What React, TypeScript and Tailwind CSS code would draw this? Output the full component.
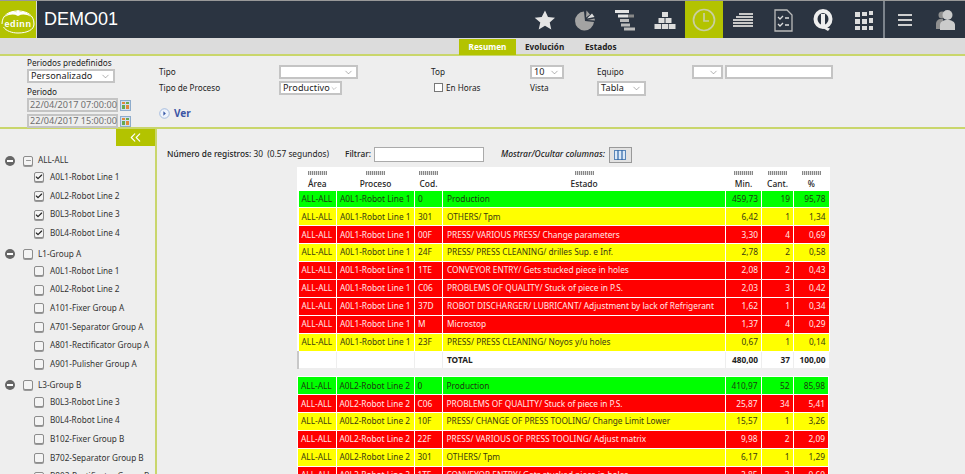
import { ChevronDown, ChevronsLeft, Check, Minus } from "lucide-react";

const FONT = "[font-family:'Noto_Sans','DejaVu_Sans',sans-serif]";

type Row = { code: string; state: string; min: string; cant: string; pct: string; color: "g" | "y" | "r" };

const line1: Row[] = [
  { code: "0", state: "Production", min: "459,73", cant: "19", pct: "95,78", color: "g" },
  { code: "301", state: "OTHERS/ Tpm", min: "6,42", cant: "1", pct: "1,34", color: "y" },
  { code: "00F", state: "PRESS/ VARIOUS PRESS/ Change parameters", min: "3,30", cant: "4", pct: "0,69", color: "r" },
  { code: "24F", state: "PRESS/ PRESS CLEANING/ drilles Sup. e Inf.", min: "2,78", cant: "2", pct: "0,58", color: "y" },
  { code: "1TE", state: "CONVEYOR ENTRY/ Gets stucked piece in holes", min: "2,08", cant: "2", pct: "0,43", color: "r" },
  { code: "C06", state: "PROBLEMS OF QUALITY/ Stuck of piece in P.S.", min: "2,03", cant: "3", pct: "0,42", color: "r" },
  { code: "37D", state: "ROBOT DISCHARGER/ LUBRICANT/ Adjustment by lack of Refrigerant", min: "1,62", cant: "1", pct: "0,34", color: "r" },
  { code: "M", state: "Microstop", min: "1,37", cant: "4", pct: "0,29", color: "r" },
  { code: "23F", state: "PRESS/ PRESS CLEANING/ Noyos y/u holes", min: "0,67", cant: "1", pct: "0,14", color: "y" },
];

const line2: Row[] = [
  { code: "0", state: "Production", min: "410,97", cant: "52", pct: "85,98", color: "g" },
  { code: "C06", state: "PROBLEMS OF QUALITY/ Stuck of piece in P.S.", min: "25,87", cant: "34", pct: "5,41", color: "r" },
  { code: "10F", state: "PRESS/ CHANGE OF PRESS TOOLING/ Change Limit Lower", min: "15,57", cant: "1", pct: "3,26", color: "y" },
  { code: "22F", state: "PRESS/ VARIOUS OF PRESS TOOLING/ Adjust matrix", min: "9,98", cant: "2", pct: "2,09", color: "r" },
  { code: "301", state: "OTHERS/ Tpm", min: "6,17", cant: "1", pct: "1,29", color: "y" },
  { code: "1TE", state: "CONVEYOR ENTRY/ Gets stucked piece in holes", min: "2,85", cant: "3", pct: "0,60", color: "r" },
];

const tree = [
  {
    name: "ALL-ALL",
    state: "some",
    items: ["A0L1-Robot Line 1", "A0L2-Robot Line 2", "B0L3-Robot Line 3", "B0L4-Robot Line 4"],
  },
  {
    name: "L1-Group A",
    state: "none",
    items: [
      "A0L1-Robot Line 1",
      "A0L2-Robot Line 2",
      "A101-Fixer Group A",
      "A701-Separator Group A",
      "A801-Rectificator Group A",
      "A901-Pulisher Group A",
    ],
  },
  {
    name: "L3-Group B",
    state: "none",
    items: [
      "B0L3-Robot Line 3",
      "B0L4-Robot Line 4",
      "B102-Fixer Group B",
      "B702-Separator Group B",
      "B802-Rectificator Group B",
    ],
  },
];

function Logo() {
  return (
    <div className="flex h-full w-[36px] shrink-0 items-center justify-center bg-[#b3c300]">
      <svg viewBox="0 0 36 36" className="h-[36px] w-[36px]">
        <path d="M2 22 C2 13 9 9 18 9 C27 9 34 13 34 22 C34 28 27 31 18 31 C12 31 6 29 3.5 25" fill="none" stroke="#fff" strokeWidth="1" />
        <path d="M5 15 C10 8 15 9 18 11 C21 9 27 9 31 15 C26 12 22 12 18 14 C14 12 10 12 5 15Z" fill="#fff" />
        <circle cx="18" cy="10" r="1.800" fill="#fff" />
        <text x="18" y="25" textAnchor="middle" fontSize="9" fontWeight="700" fill="#fff" fontFamily="'Liberation Sans', sans-serif" letterSpacing="0.6">
          edinn
        </text>
      </svg>
    </div>
  );
}

function NavIcon({ children, active }: { children: React.ReactNode; active?: boolean }) {
  return (
    <div className={`flex h-full w-[40px] items-center justify-center ${active ? "bg-[#b3c300]" : ""}`}>
      <svg viewBox="0 0 24 24" className="h-[24px] w-[24px]">
        {children}
      </svg>
    </div>
  );
}

function Header() {
  return (
    <div className="flex h-[38px] border-t border-[#999] bg-[#2b3441]">
      <Logo />
      <div className="flex w-[8px] border-l border-[#d8d8d8]" />
      <div className="flex-1 text-[18px] leading-[36px] text-white [font-family:'Liberation_Sans',sans-serif]">DEMO01</div>
      <div className="flex h-full">
        <NavIcon>
          <path d="M12 2.500l3 6.600 7 .7-5.300 4.700 1.600 7.100-6.300-3.800-6.300 3.800 1.600-7.100L1.700 9.800l7-.7z" fill="#e4e4e4" />
        </NavIcon>
        <NavIcon>
          <path d="M11 3.500A9.500 9.500 0 1 0 21 14L12 13z" fill="#a3a3a3" />
          <path d="M13.500 2.500l3.500 4-4 3z" fill="#a3a3a3" />
          <path d="M14 10.500l5-5 2.500 3.500z" fill="#ddd" />
          <path d="M14.500 12l7-1.500.5 2z" fill="#a3a3a3" />
        </NavIcon>
        <NavIcon>
          <rect x="2" y="2" width="14" height="3" fill="#e4e4e4" />
          <rect x="5" y="6.500" width="10" height="3" fill="#e4e4e4" />
          <rect x="15" y="6.500" width="6" height="3" fill="#888" />
          <rect x="7" y="11" width="9" height="3" fill="#bbb" />
          <rect x="8" y="15.500" width="9" height="3" fill="#bbb" />
          <rect x="11" y="19.500" width="11" height="3" fill="#bbb" />
        </NavIcon>
        <NavIcon>
          <rect x="9" y="4" width="6" height="5" fill="#ddd" />
          <rect x="5.500" y="10" width="6" height="5" fill="#ddd" />
          <rect x="12.500" y="10" width="6" height="5" fill="#ddd" />
          <rect x="1.500" y="16" width="6.500" height="5" fill="#ddd" />
          <rect x="8.800" y="16" width="6.500" height="5" fill="#ddd" />
          <rect x="16" y="16" width="6.500" height="5" fill="#ddd" />
        </NavIcon>
        <div className="flex h-full w-[38px] items-center justify-center bg-[#b3c300]">
          <svg viewBox="0 0 24 24" className="h-[24px] w-[24px]" fill="none" stroke="#c9cfa0" strokeWidth="1.700">
            <circle cx="12" cy="12" r="10.500" />
            <path d="M12 5v8h5" />
          </svg>
        </div>
        <NavIcon>
          <path d="M8 5h14v2H8zM5 8h17v2H5zM2 11h20v2H2zM2 14h20v2H2zM2 17h20v2H2z" fill="#c8c8c8" />
        </NavIcon>
        <NavIcon>
          <path d="M4 2h12l5 5v16H4z" fill="none" stroke="#bbb" strokeWidth="1.300" />
          <path d="M7 9l2 2 3-3M7 16l2 2 3-3" fill="none" stroke="#ddd" strokeWidth="1.300" />
          <path d="M14 10h4M14 17h4" stroke="#ddd" strokeWidth="1.300" />
        </NavIcon>
        <NavIcon>
          <ellipse cx="12" cy="11" rx="7.500" ry="8" fill="none" stroke="#eee" strokeWidth="4" />
          <path d="M10 6h4v13l5 1.500-2 2.500-7-4z" fill="#eee" />
        </NavIcon>
        <NavIcon>
          <path d="M4 4h5v5H4zM11 4h5v4h-5zM18 3h4v4h-4zM4 11h5v5H4zM11 11h5v5h-5zM18 10h4v5h-4zM4 18h5v4H4zM11 18h5v4h-5zM18 18h4v4h-4z" fill="#ddd" />
        </NavIcon>
        <div className="w-[2px] bg-[#7c838c]" />
        <NavIcon>
          <path d="M5 6h14v2H5zM5 11h14v2H5zM5 16h14v2H5z" fill="#cfcfcf" />
        </NavIcon>
        <NavIcon>
          <circle cx="9" cy="7" r="3.500" fill="#8f8f8f" />
          <path d="M3 21v-5c0-3 2-5 5-5h2v10z" fill="#8f8f8f" />
          <circle cx="14.500" cy="7" r="5" fill="#cbcbcb" />
          <path d="M7 22v-5c0-3 3-5 7.500-5s7.500 2 7.500 5v5z" fill="#cbcbcb" />
        </NavIcon>
      </div>
    </div>
  );
}

function Tabs() {
  return (
    <div className="flex h-[18px] border-b-2 border-[#c9d66b] bg-[#dcdcdc] pl-[459px] pt-[1px] text-[8.200px] font-bold text-[#222]">
      <div className="flex h-[16px] w-[57px] items-center justify-center bg-[#b3c300] text-white">Resumen</div>
      <div className="flex h-[16px] w-[69px] items-center pl-[9px]">Evolución</div>
      <div className="flex h-[16px] items-center">Estados</div>
    </div>
  );
}

function Select({ value, className }: { value?: string; className: string }) {
  return (
    <div className={`flex items-center justify-between border-2 border-[#c4c4c4] bg-white pl-[2px] pr-[2px] text-[9.100px] leading-none tracking-[0.1px] text-[#222] ${className}`}>
      <span>{value}</span>
      <ChevronDown size={11} strokeWidth={1} className="text-[#555]" />
    </div>
  );
}

function DateField({ value }: { value: string }) {
  return (
    <div className="flex items-center gap-[2px]">
      <div className="flex h-[14px] w-[91px] items-center whitespace-nowrap border-2 border-[#c4c4c4] bg-[#eee] pl-[1px] text-[9.100px] leading-none text-[#6e6e6e]">
        {value}
      </div>
      <svg viewBox="0 0 11 11" className="h-[11px] w-[11px]">
        <rect x="0.500" y="0.500" width="10" height="10" fill="#cfe0f2" stroke="#8eaccc" />
        <rect x="2" y="2" width="3" height="2" fill="#e08a3c" />
        <rect x="6" y="2" width="3" height="2" fill="#6aa84f" />
        <rect x="2" y="5" width="3" height="4" fill="#6aa84f" />
        <rect x="6" y="5" width="3" height="4" fill="#e08a3c" />
      </svg>
    </div>
  );
}

function Filters() {
  return (
    <div className="flex h-[73px] border-b-2 border-[#c9d66b] pl-[27px] text-[8.200px] text-[#222]">
      <div className="w-[132px] pt-[1px]">
        <div className="h-[12px] leading-[12px]">Periodos predefinidos</div>
        <Select value="Personalizado" className="h-[14px] w-[88px]" />
        <div className="mt-[2px] h-[13px] leading-[13px]">Periodo</div>
        <div className="flex flex-col gap-[2px]">
          <DateField value="22/04/2017 07:00:00" />
          <DateField value="22/04/2017 15:00:00" />
        </div>
      </div>
      <div className="w-[272px] pt-[8px]">
        <div className="flex h-[16px] items-center">
          <span className="w-[120px]">Tipo</span>
          <Select className="h-[14px] w-[79px]" />
        </div>
        <div className="flex h-[16px] items-center">
          <span className="w-[120px]">Tipo de Proceso</span>
          <Select value="Productivo" className="h-[14px] w-[63px]" />
        </div>
        <div className="mt-[10px] flex items-center gap-[4px] text-[10px] font-bold text-[#3b55a5]">
          <svg viewBox="0 0 12 12" className="h-[11px] w-[11px]">
            <circle cx="6" cy="6" r="5.200" fill="#eef3fb" stroke="#9db6dd" />
            <path d="M4.800 3.500L7.500 6 4.800 8.500z" fill="#3a5aa8" />
          </svg>
          Ver
        </div>
      </div>
      <div className="w-[166px] pt-[8px]">
        <div className="flex h-[16px] items-center">
          <span className="w-[99px]">Top</span>
          <Select value="10" className="h-[14px] w-[34px]" />
        </div>
        <div className="flex h-[16px] items-center">
          <span className="flex w-[99px] items-center gap-[3px] pl-[3px]">
            <span className="h-[9px] w-[9px] border border-[#777] bg-white" />
            En Horas
          </span>
          <span>Vista</span>
        </div>
      </div>
      <div className="w-[240px] pt-[8px]">
        <div className="flex h-[16px] items-center">
          <span className="w-[95px]">Equipo</span>
          <Select className="h-[14px] w-[31px]" />
          <div className="ml-[2px] h-[14px] w-[108px] border-2 border-[#c4c4c4] bg-white" />
        </div>
        <div className="flex h-[16px] items-center">
          <Select value="Tabla" className="h-[15px] w-[49px]" />
        </div>
      </div>
    </div>
  );
}

function TreeBox({ state }: { state: string }) {
  return (
    <span className="flex h-[10px] w-[10px] shrink-0 items-center justify-center rounded-[2px] border border-[#8c8c8c] bg-[#f4f4f4] shadow-[0_1px_0_#999]">
      {state === "all" && <Check size={8} strokeWidth={3.500} className="text-[#222]" />}
      {state === "some" && <Minus size={7} strokeWidth={2} className="text-[#555]" />}
    </span>
  );
}

function Sidebar() {
  return (
    <div className="h-full w-[157px] shrink-0 overflow-hidden border-r-2 border-[#c9d66b] text-[8.200px] text-[#333]">
      <div className="flex justify-end">
        <div className="flex h-[17px] w-[39px] items-center justify-center bg-[#b3c300] text-white">
          <ChevronsLeft size={17} strokeWidth={1.600} />
        </div>
      </div>
      <div className="pt-[7px]">
        {tree.map((g, gi) => (
          <div key={g.name} className={gi > 0 ? "mt-[4px]" : ""}>
            <div className="flex h-[15px] items-center pl-[5px]">
              <span className="flex h-[10px] w-[10px] items-center justify-center rounded-full bg-[#666]">
                <span className="h-[2px] w-[6px] bg-white" />
              </span>
              <span className="ml-[8px]">
                <TreeBox state={g.state} />
              </span>
              <span className="ml-[5px]">{g.name}</span>
            </div>
            {g.items.map((item) => (
              <div key={item} className="flex h-[18.670px] items-center pl-[34px]">
                <TreeBox state={gi === 0 ? "all" : "none"} />
                <span className="ml-[6px] whitespace-nowrap">{item}</span>
              </div>
            ))}
          </div>
        ))}
      </div>
    </div>
  );
}

const rowColor = {
  g: "bg-[#00ff00] text-[#1c3a10]",
  y: "bg-[#ffff00] text-[#3a3a10]",
  r: "bg-[#ff0000] text-[#ffe8e8]",
};

function Cols() {
  return (
    <colgroup>
      <col className="w-[38.500px]" />
      <col className="w-[78px]" />
      <col className="w-[28px]" />
      <col className="w-[283px]" />
      <col className="w-[36px]" />
      <col className="w-[32px]" />
      <col className="w-[35.500px]" />
    </colgroup>
  );
}

function HeadCell({ label }: { label: string }) {
  return (
    <th className="h-[23px] p-0 align-bottom text-[8.400px] font-medium leading-[11px] text-[#222]">
      <div className="mx-auto mb-[3px] h-[4px] w-[19px] bg-[repeating-linear-gradient(90deg,#888_0,#888_1px,#ddd_1px,#ddd_2px)]" />
      <div className="pb-[1px]">{label}</div>
    </th>
  );
}

function DataRows({ rows, line }: { rows: Row[]; line: string }) {
  return (
    <>
      {rows.map((r) => (
        <tr key={r.code} className={`h-[17.900px] whitespace-nowrap leading-none ${rowColor[r.color]}`}>
          <td className="border border-white pl-[3px]">ALL-ALL</td>
          <td className="border border-white pl-[3px]">{line}</td>
          <td className="border border-white pl-[3px]">{r.code}</td>
          <td className="border border-white pl-[4px]">{r.state}</td>
          <td className="border border-white pr-[3px] text-right">{r.min}</td>
          <td className="border border-white pr-[3px] text-right">{r.cant}</td>
          <td className="border border-white pr-[3px] text-right">{r.pct}</td>
        </tr>
      ))}
    </>
  );
}

function Content() {
  return (
    <div className="min-w-0 flex-1 pt-[18px] text-[8.300px] text-[#222]">
      <div className="flex h-[15px] items-center pl-[10px]">
        <span className="w-[178px] whitespace-nowrap">
          <span className="font-medium">Número de registros:</span> 30&nbsp; (0.57 segundos)
        </span>
        <span className="font-medium">Filtrar:</span>
        <div className="ml-[3px] h-[15px] w-[110px] border border-[#aaa] bg-white" />
        <span className="ml-[17px] text-[8.500px] font-medium italic">Mostrar/Ocultar columnas:</span>
        <div className="ml-[4px] flex h-[16px] w-[23px] items-center justify-center border border-[#999] bg-[#e2e2e2]">
          <svg viewBox="0 0 12 10" className="h-[10px] w-[12px]">
            <rect x="0.500" y="0.500" width="11" height="9" fill="#dbe9f8" stroke="#5a86b8" />
            <path d="M4 0v10M8 0v10" stroke="#2f68a8" strokeWidth="1.200" />
          </svg>
        </div>
      </div>
      <div className="ml-[140px] mt-[5px] w-[531px]">
        <table className="w-[531px] table-fixed border-collapse bg-white">
          <Cols />
          <thead>
            <tr>
              <HeadCell label="Área" />
              <HeadCell label="Proceso" />
              <HeadCell label="Cod." />
              <HeadCell label="Estado" />
              <HeadCell label="Min." />
              <HeadCell label="Cant." />
              <HeadCell label="%" />
            </tr>
          </thead>
          <tbody>
            <DataRows rows={line1} line="A0L1-Robot Line 1" />
            <tr className="h-[17.900px] font-bold leading-none text-[#222]">
              <td className="border border-[#eee] border-l-2 border-l-[#c8c8c8]" />
              <td className="border border-[#eee]" />
              <td className="border border-[#eee]" />
              <td className="border border-[#eee] pl-[4px]">TOTAL</td>
              <td className="border border-[#eee] pr-[3px] text-right">480,00</td>
              <td className="border border-[#eee] pr-[3px] text-right">37</td>
              <td className="border border-[#eee] pr-[3px] text-right">100,00</td>
            </tr>
          </tbody>
        </table>
        <table className="mt-[7px] w-[531px] table-fixed border-collapse">
          <Cols />
          <tbody>
            <DataRows rows={line2} line="A0L2-Robot Line 2" />
          </tbody>
        </table>
      </div>
    </div>
  );
}

export default function App() {
  return (
    <div className={`flex h-[474px] w-[965px] flex-col overflow-hidden bg-[#eeeeee] ${FONT}`}>
      <Header />
      <Tabs />
      <Filters />
      <div className="flex min-h-0 flex-1">
        <Sidebar />
        <Content />
      </div>
    </div>
  );
}
